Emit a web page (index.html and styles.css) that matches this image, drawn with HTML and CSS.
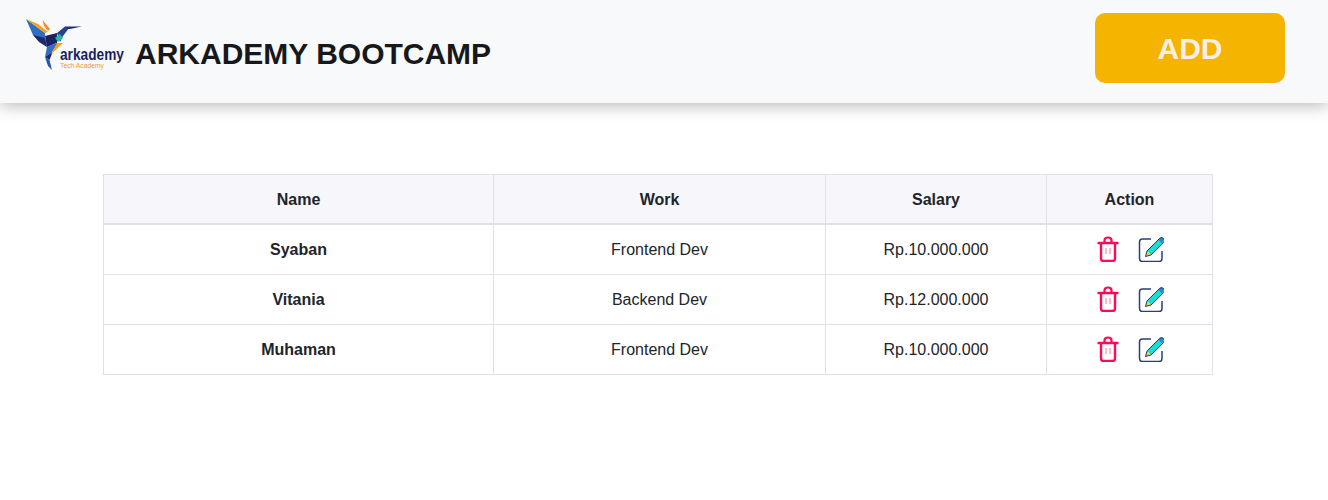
FILE: index.html
```html
<!DOCTYPE html>
<html lang="en">
<head>
  <meta charset="UTF-8">
  <meta name="viewport" content="width=device-width, initial-scale=1.0">
  <title>Arkademy Bootcamp</title>
  <link rel="stylesheet" href="styles.css">
</head>
<body>
  <header class="navbar">
    <div class="brand">
      <svg class="logo" width="102" height="56" viewBox="0 0 102 56">
        <polygon points="2,3 9,19 21,29 23,31 21,22 21,17" fill="#2f6fc0"/>
        <polygon points="2,3 14,8 24,16 21,17" fill="#f6a11a"/>
        <polygon points="18.500,4 26,13 24,15 20,10" fill="#f58a1f"/>
        <polygon points="9,19 21,22 23,31 15,26" fill="#1d2a6b"/>
        <polygon points="21,20 33,17 33,27 23,31" fill="#1b2260"/>
        <polygon points="33,17 41,10.500 45,12 39,20 36,26" fill="#27408f"/>
        <polygon points="41,10.500 58,10.500 46,13 44,13" fill="#1f2f7a"/>
        <polygon points="31,22 36,18 39,22 34,26" fill="#1fb8a0"/>
        <polygon points="27.500,39 31,27 39,27 29.500,36" fill="#f6a11a"/>
        <polygon points="23,31 33,27 28,36 21,41" fill="#2f6fc0"/>
        <polygon points="21,41 28,36 27.500,39 25.500,44" fill="#1d2a6b"/>
        <polygon points="21,41 25.500,44 28,54 24,50" fill="#2a55a8"/>
        <text class="logo-name" transform="translate(36 44) scale(.857 1)">arkademy</text>
        <text class="logo-sub" x="36" y="52" textLength="44" lengthAdjust="spacingAndGlyphs">Tech Academy</text>
      </svg>
      <h1 class="title">ARKADEMY BOOTCAMP</h1>
    </div>
    <button class="btn-add">ADD</button>
  </header>

  <main class="container">
    <table class="table">
      <thead>
        <tr>
          <th class="col-name">Name</th>
          <th class="col-work">Work</th>
          <th class="col-salary">Salary</th>
          <th>Action</th>
        </tr>
      </thead>
      <tbody>
        <tr>
          <th>Syaban</th>
          <td>Frontend Dev</td>
          <td>Rp.10.000.000</td>
          <td>
            <div class="actions">
              <svg width="22" height="26" viewBox="0 0 22 26"><use href="#trash"/></svg>
              <svg width="26" height="26" viewBox="0 0 26 26"><use href="#edit"/></svg>
            </div>
          </td>
        </tr>
        <tr>
          <th>Vitania</th>
          <td>Backend Dev</td>
          <td>Rp.12.000.000</td>
          <td>
            <div class="actions">
              <svg width="22" height="26" viewBox="0 0 22 26"><use href="#trash"/></svg>
              <svg width="26" height="26" viewBox="0 0 26 26"><use href="#edit"/></svg>
            </div>
          </td>
        </tr>
        <tr>
          <th>Muhaman</th>
          <td>Frontend Dev</td>
          <td>Rp.10.000.000</td>
          <td>
            <div class="actions">
              <svg width="22" height="26" viewBox="0 0 22 26"><use href="#trash"/></svg>
              <svg width="26" height="26" viewBox="0 0 26 26"><use href="#edit"/></svg>
            </div>
          </td>
        </tr>
      </tbody>
    </table>
  </main>

  <svg class="sprites" width="0" height="0">
    <defs>
      <g id="trash">
        <path d="M1.500 7H20.500" fill="none" stroke="#ff0a54" stroke-width="2.400" stroke-linecap="round"/>
        <path d="M7.500 6.500V4.500Q7.500 1.500 11 1.500T14.500 4.500V6.500" fill="none" stroke="#ff0a54" stroke-width="2.200"/>
        <path d="M4 7V22.500Q4 25 6.500 25H15.500Q18 25 18 22.500V7" fill="none" stroke="#ff0a54" stroke-width="2.400"/>
        <path d="M9 12V18M13 12V18" fill="none" stroke="#ffb3c8" stroke-width="1.800"/>
      </g>
      <g id="edit">
        <path d="M13 3H4.500Q1.500 3 1.500 6V22.500Q1.500 25.500 4.500 25.500H21Q24 25.500 24 22.500V15" fill="none" stroke="#2a3f78" stroke-width="1.500"/>
        <polygon points="9,15 20,4 24,8 13,19" fill="#12e0d2"/>
        <polygon points="20,4 22,1.500 25,1.500 26,4 24,8" fill="#1f8fd0"/>
        <polygon points="9,15 13,19 7.500,20.500" fill="#f6d02a"/>
        <path d="M7.500 20.500L9 15L21.500 2.500Q23.500 0.800 25.500 2.500T25.500 6.500L13 19Z" fill="none" stroke="#1c3a70" stroke-width="1"/>
      </g>
    </defs>
  </svg>
</body>
</html>
```

FILE: styles.css
```css
body {
  margin: 0;
  background: #fff;
  color: #212529;
  font-family: "Liberation Sans", Arial, sans-serif;
  font-size: 16px;
}

.navbar {
  display: flex;
  justify-content: space-between;
  align-items: flex-start;
  height: 103px;
  padding: 0 43px 0 24px;
  background: #f8f9fa;
  box-shadow: 0 2px 16px rgba(0,0,0,0.3);
}

.brand {
  display: flex;
  align-items: flex-start;
  padding-top: 16px;
}

.logo {
  flex-shrink: 0;
}

.logo-name {
  font-size: 16px;
  font-weight: 700;
  fill: #1b1f5e;
}

.logo-sub {
  font-size: 8px;
  fill: #f39a1e;
}

.title {
  margin: 20px 0 0 9px;
  font-size: 30px;
  line-height: 36px;
  font-weight: 700;
  color: #16181b;
}

.btn-add {
  width: 190px;
  height: 70px;
  margin-top: 13px;
  padding: 2px 0 0;
  background: #f5b400;
  color: #fdeee8;
  border: none;
  border-radius: 10px;
  font-family: inherit;
  font-size: 30px;
  font-weight: 700;
  cursor: pointer;
}

.container {
  width: 1110px;
  margin: 71px 0 0 103px;
}

.table {
  width: 100%;
  table-layout: fixed;
  border-collapse: collapse;
}

.table th,
.table td {
  height: 49px;
  padding: 0;
  border: 1px solid #dee2e6;
  text-align: center;
  vertical-align: middle;
}

.table thead th {
  height: 46px;
  padding-top: 2px;
  background: #f6f6fb;
  border-bottom-width: 2px;
}

.col-name {
  width: 389px;
}

.col-work {
  width: 331px;
}

.col-salary {
  width: 220px;
}

.actions {
  display: flex;
  justify-content: center;
  align-items: center;
  gap: 19px;
  padding-left: 1px;
  margin-bottom: 2px;
}

.actions svg {
  display: block;
}

.sprites {
  position: absolute;
}
```
